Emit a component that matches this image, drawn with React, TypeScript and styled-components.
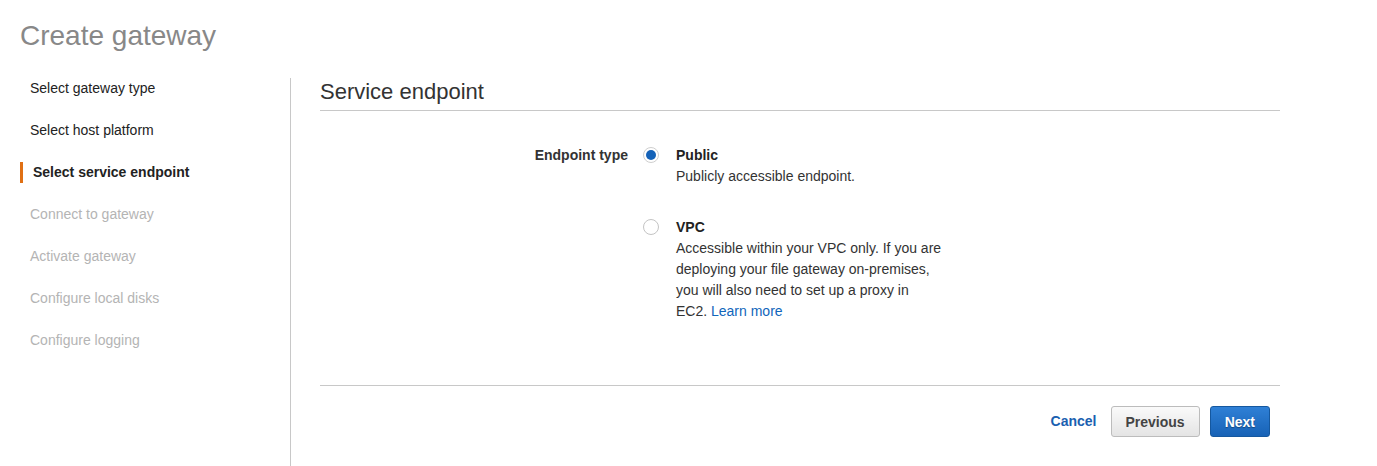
import * as React from "react";
import styled, { createGlobalStyle, css } from "styled-components";

const GlobalStyle = createGlobalStyle`
  html, body {
    margin: 0;
    padding: 0;
    background: #fff;
  }
  body {
    font-family: "Liberation Sans", Arial, sans-serif;
    font-size: 14px;
    color: #333;
  }
`;

const Page = styled.div`
  padding-left: 20px;
  height: 466px;
  overflow: hidden;
`;

const Title = styled.h1`
  margin: 19px 0 0;
  font-size: 28px;
  line-height: 34px;
  font-weight: 400;
  color: #888;
`;

const Body = styled.div`
  display: flex;
  margin-top: 14px;
`;

const Sidebar = styled.ul`
  list-style: none;
  margin: 0;
  padding: 0;
  width: 270px;
  flex: none;
`;

const StepItem = styled.li<{ $state: "done" | "active" | "todo" }>`
  display: flex;
  align-items: center;
  height: 42px;
  padding-left: 10px;
  font-size: 14px;
  color: #222;

  ${(p) =>
    p.$state === "active" &&
    css`
      padding-left: 0;
      font-weight: 700;
      color: #222;
    `}

  ${(p) =>
    p.$state === "todo" &&
    css`
      color: #b4b4b4;
    `}
`;

const Marker = styled.span`
  width: 3px;
  height: 21px;
  background: #e07014;
  margin-right: 10px;
`;

const Content = styled.section`
  margin-top: 11px;
  border-left: 1px solid #c8c8c8;
  padding-left: 29px;
  width: 960px;
  height: 388px;
  display: flex;
  flex-direction: column;
`;

const SectionHeading = styled.h2`
  margin: 2px 0 0;
  padding-bottom: 6px;
  border-bottom: 1px solid #c8c8c8;
  font-size: 22px;
  line-height: 24px;
  font-weight: 400;
  color: #333;
`;

const FormRow = styled.div`
  display: grid;
  grid-template-columns: 308px 1fr;
  column-gap: 15px;
  margin-top: 34px;
`;

const FieldLabel = styled.div`
  text-align: right;
  font-weight: 700;
  line-height: 21px;
  color: #333;
`;

const Options = styled.div`
  display: flex;
  flex-direction: column;
  gap: 30px;
`;

const Option = styled.label`
  display: flex;
  align-items: flex-start;
`;

const Radio = styled.span<{ $checked?: boolean }>`
  flex: none;
  box-sizing: border-box;
  width: 16px;
  height: 16px;
  margin-top: 2px;
  margin-right: 17px;
  border-radius: 50%;
  border: 1px solid ${(p) => (p.$checked ? "#cfcfcf" : "#c4c4c4")};
  background: #fff;
  display: flex;
  align-items: center;
  justify-content: center;

  ${(p) =>
    p.$checked &&
    css`
      &::after {
        content: "";
        width: 10px;
        height: 10px;
        border-radius: 50%;
        background: #1462b8;
      }
    `}
`;

const OptionText = styled.div`
  width: 280px;
  line-height: 21px;
`;

const OptionTitle = styled.div`
  font-weight: 700;
  color: #222;
`;

const OptionDesc = styled.div`
  color: #333;
`;

const Link = styled.a`
  color: #1166bb;
  text-decoration: none;
`;

const Footer = styled.div`
  margin-top: auto;
  border-top: 1px solid #c8c8c8;
  padding: 20px 10px 0 0;
  height: 60px;
  display: flex;
  justify-content: flex-end;
  align-items: flex-start;
  gap: 10px;
`;

const CancelLink = styled.a`
  font-weight: 700;
  color: #1a60b0;
  line-height: 31px;
  margin-right: 4px;
  text-decoration: none;
`;

const Button = styled.button<{ $primary?: boolean }>`
  height: 31px;
  padding: 0 14px;
  border-radius: 3px;
  font-family: "Liberation Sans", Arial, sans-serif;
  font-size: 14px;
  font-weight: 700;
  cursor: pointer;
  border: 1px solid #bcbcbc;
  color: #444;
  background: linear-gradient(#fafafa, #e4e4e4);

  ${(p) =>
    p.$primary &&
    css`
      border-color: #15589f;
      color: #fff;
      text-shadow: 0 1px 1px rgba(0, 0, 0, 0.35);
      background: linear-gradient(#2f80d6, #1762b6);
    `}
`;

type Step = { label: string; state: "done" | "active" | "todo" };

const steps: Step[] = [
  { label: "Select gateway type", state: "done" },
  { label: "Select host platform", state: "done" },
  { label: "Select service endpoint", state: "active" },
  { label: "Connect to gateway", state: "todo" },
  { label: "Activate gateway", state: "todo" },
  { label: "Configure local disks", state: "todo" },
  { label: "Configure logging", state: "todo" },
];

const App = () => {
  return (
    <Page>
      <GlobalStyle />
      <Title>Create gateway</Title>
      <Body>
        <Sidebar>
          {steps.map((s) => (
            <StepItem key={s.label} $state={s.state}>
              {s.state === "active" && <Marker />}
              {s.label}
            </StepItem>
          ))}
        </Sidebar>
        <Content>
          <SectionHeading>Service endpoint</SectionHeading>
          <FormRow>
            <FieldLabel>Endpoint type</FieldLabel>
            <Options>
              <Option>
                <Radio $checked />
                <OptionText>
                  <OptionTitle>Public</OptionTitle>
                  <OptionDesc>Publicly accessible endpoint.</OptionDesc>
                </OptionText>
              </Option>
              <Option>
                <Radio />
                <OptionText>
                  <OptionTitle>VPC</OptionTitle>
                  <OptionDesc>
                    Accessible within your VPC only. If you are
                    <br />
                    deploying your file gateway on-premises,
                    <br />
                    you will also need to set up a proxy in
                    <br />
                    EC2. <Link href="#">Learn more</Link>
                  </OptionDesc>
                </OptionText>
              </Option>
            </Options>
          </FormRow>
          <Footer>
            <CancelLink href="#">Cancel</CancelLink>
            <Button>Previous</Button>
            <Button $primary>Next</Button>
          </Footer>
        </Content>
      </Body>
    </Page>
  );
};

export default App;
